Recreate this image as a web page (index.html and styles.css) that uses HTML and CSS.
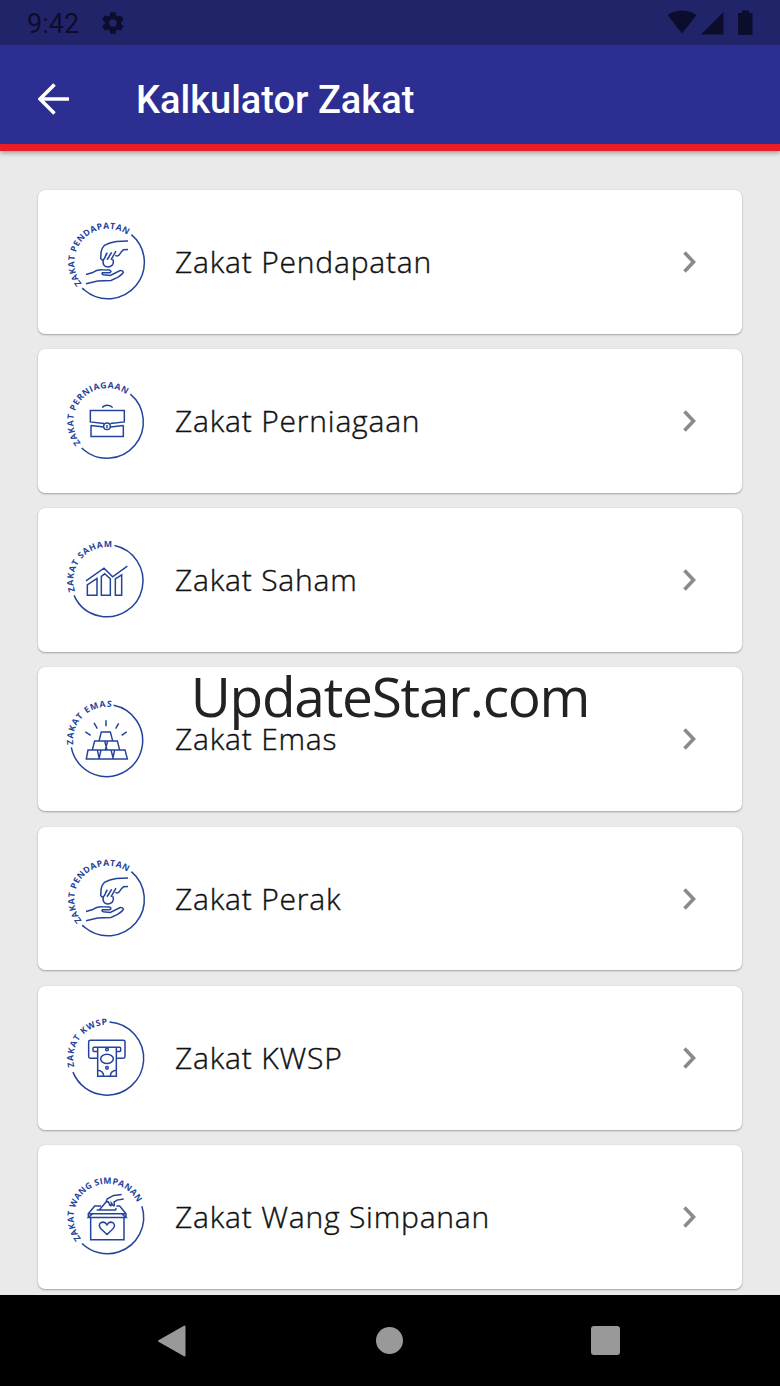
FILE: index.html
```html
<!DOCTYPE html>
<html lang="ms">
  <head>
    <meta charset="UTF-8">
    <title>Kalkulator Zakat</title>
    <link rel="stylesheet" href="styles.css">
  </head>
  <body>
    <!-- shared shapes -->
    <svg class="defs" width="0" height="0">
      <defs>
        <path id="ring" d="M-101 0A101 101 0 0 1 101 0A101 101 0 0 1 -101 0"/>
        <path id="chevron" d="M2.500 2.500L11.500 12L2.500 21.500"/>
        <g id="hands">
          <path d="M221 93L186 94Q165 97 150 106Q140 116 140 132L139 145Q143 153 149 147"/>
          <path d="M221 118L207 119Q200 124 195 134Q190 140 183 136"/>
          <path d="M149 147L159 128M158 149L172 127M170 149L185 123M159 128Q152 137 151 146M172 127Q164 137 162 145"/>
          <path d="M148 148Q143 161 152 168Q163 174 173 166Q180 158 175 147"/>
          <path d="M95 193L113 188Q130 177 144 179L166 180Q174 184 166 188L145 188Q140 191 147 194L168 196L196 182Q206 180 207 187Q204 193 190 202L170 211L130 213L95 221"/>
        </g>
      </defs>
    </svg>

    <div id="app">
      <header>
        <div class="status">
          <span class="clock">9:42</span>
          <svg class="gear" width="26" height="26" viewBox="0 0 24 24"><path fill-rule="evenodd" d="M19.400 13a7.500 7.500 0 0 0 0-2l2.100-1.600c.2-.2.300-.4.100-.7l-2-3.400c-.1-.2-.4-.3-.6-.2l-2.500 1a7.300 7.300 0 0 0-1.700-1l-.4-2.600c0-.3-.2-.5-.5-.5h-4c-.3 0-.5.2-.5.5L9 5.100a7.300 7.300 0 0 0-1.700 1l-2.500-1c-.2-.1-.5 0-.6.200l-2 3.400c-.1.300-.1.500.1.700L4.500 11a7.500 7.500 0 0 0 0 2l-2.200 1.600c-.2.200-.2.400-.1.700l2 3.400c.1.200.4.300.6.200l2.500-1c.5.400 1.100.7 1.700 1l.4 2.600c0 .3.200.5.500.5h4c.3 0 .5-.2.5-.5l.4-2.600c.6-.3 1.200-.6 1.700-1l2.500 1c.2.100.5 0 .6-.2l2-3.400c.1-.3.100-.5-.1-.7zM12 8.500a3.500 3.500 0 1 1 0 7a3.500 3.500 0 0 1 0-7z"/></svg>
          <svg class="signal" width="86" height="26" viewBox="0 0 86 26">
            <path d="M.5 5Q15 -4 29.500 5L15 23.500Z"/>
            <path d="M34 24.500L56.500 2V24.500Z"/>
            <path d="M71 3H75V.5H82V3H85.500V25H71Z"/>
          </svg>
        </div>
        <div class="bar">
          <svg width="32" height="32" viewBox="0 0 32 32"><path class="back" d="M31 16H2.500M16.500 1.500L2 16L16.500 30.500"/></svg>
          <h1>Kalkulator Zakat</h1>
        </div>
      </header>

      <div id="list">
        <div class="card">
          <svg class="icon" viewBox="2 5.700 300 300">
            <g transform="translate(161 157)">
              <circle r="109" pathLength="360" stroke-dasharray="185 175" transform="rotate(-50)"/>
              <text transform="rotate(-39)" textLength="289"><textPath href="#ring" textLength="289">ZAKAT PENDAPATAN</textPath></text>
            </g>
            <use href="#hands"/>
          </svg>
          <span>Zakat Pendapatan</span>
          <svg class="next" viewBox="0 0 15 24"><use href="#chevron"/></svg>
        </div>

        <div class="card">
          <svg class="icon" viewBox="1 3.300 300 300">
            <g transform="translate(157 156)">
              <circle r="109" pathLength="360" stroke-dasharray="184 176" transform="rotate(-50)"/>
              <text transform="rotate(-39)" textLength="289"><textPath href="#ring" textLength="289">ZAKAT PERNIAGAAN</textPath></text>
            </g>
            <path d="M143 113Q147 106 158 106Q169 106 174 113M148 161L107 156V122H209V156L167 161M109 166V200H206V166M109 167L148 171M206 167L167 171"/>
            <circle cx="157" cy="169" r="10"/>
            <path d="M157 165V174"/>
          </svg>
          <span>Zakat Perniagaan</span>
          <svg class="next" viewBox="0 0 15 24"><use href="#chevron"/></svg>
        </div>

        <div class="card">
          <svg class="icon" viewBox="1 .6 300 300">
            <g transform="translate(157 153)">
              <circle r="108" pathLength="360" stroke-dasharray="234 126" transform="rotate(-78)"/>
              <text transform="rotate(-18)" textLength="205"><textPath href="#ring" textLength="205">ZAKAT SAHAM</textPath></text>
            </g>
            <path d="M94 153L148 115L174 141L218 109M98 196V165L127 146V196ZM140 196V140L150 132L167 147V196ZM182 196V147L201 135V196Z"/>
          </svg>
          <span>Zakat Saham</span>
          <svg class="next" viewBox="0 0 15 24"><use href="#chevron"/></svg>
        </div>

        <div class="card">
          <svg class="icon" viewBox="0 -1.800 300 300">
            <g transform="translate(155 153)">
              <circle r="108" pathLength="360" stroke-dasharray="248 112" transform="rotate(-79)"/>
              <text transform="rotate(-7)" textLength="185"><textPath href="#ring" textLength="185">ZAKAT EMAS</textPath></text>
            </g>
            <path d="M91 127L107 137M117 100L127 117M153 92V110M191 101L182 117M215 127L200 137"/>
            <path d="M139 127H166L173 154H132ZM119 154H149L156 181H112ZM158 154H187L194 181H151ZM99 181H127L133 208H94ZM138 181H168L175 208H132ZM179 181H210L217 208H173Z"/>
          </svg>
          <span>Zakat Emas</span>
          <svg class="next" viewBox="0 0 15 24"><use href="#chevron"/></svg>
        </div>

        <div class="card">
          <svg class="icon" viewBox="2 5.700 300 300">
            <g transform="translate(161 157)">
              <circle r="109" pathLength="360" stroke-dasharray="185 175" transform="rotate(-50)"/>
              <text transform="rotate(-39)" textLength="289"><textPath href="#ring" textLength="289">ZAKAT PENDAPATAN</textPath></text>
            </g>
            <use href="#hands"/>
          </svg>
          <span>Zakat Perak</span>
          <svg class="next" viewBox="0 0 15 24"><use href="#chevron"/></svg>
        </div>

        <div class="card">
          <svg class="icon" viewBox="1 3.500 300 300">
            <g transform="translate(157 155)">
              <circle r="110" pathLength="360" stroke-dasharray="244 116" transform="rotate(-86)"/>
              <text transform="rotate(-14)" textLength="184"><textPath href="#ring" textLength="184">ZAKAT KWSP</textPath></text>
            </g>
            <path d="M130 154H107Q102 154 102 149V105Q102 100 107 100H206Q211 100 211 105V149Q211 154 206 154H186"/>
            <path d="M129 134H118Q115 134 115 131V124Q115 121 118 121H195Q198 121 198 124V131Q198 134 195 134H186M129 122V208H185V122M130 190Q146 192 147 207M184 190Q168 192 167 207"/>
            <ellipse cx="157" cy="156" rx="19" ry="14"/>
            <circle cx="157" cy="128" r="4"/>
            <circle cx="157" cy="183" r="4"/>
          </svg>
          <span>Zakat KWSP</span>
          <svg class="next" viewBox="0 0 15 24"><use href="#chevron"/></svg>
        </div>

        <div class="card">
          <svg class="icon" viewBox="0 5.700 300 300">
            <g transform="translate(157 157)">
              <circle r="109" pathLength="360" stroke-dasharray="152 208" transform="rotate(-18)"/>
              <text transform="rotate(-39)" textLength="339"><textPath href="#ring" textLength="339">ZAKAT WANG SIMPANAN</textPath></text>
            </g>
            <path d="M113 146H200L213 157H100ZM100 146H213V157H100ZM107 157V224H207V157M100 146L119 123H138M213 146L194 123H184M125 135H181L184 129M134 133L153 111L157 101L176 91L200 88M153 111L160 110L165 121Q170 125 169 114L175 122Q180 123 177 111L186 105L206 102"/>
            <path d="M156 208L137 190Q129 180 137 173Q149 167 156 179Q163 167 174 173Q183 181 174 191Z"/>
          </svg>
          <span>Zakat Wang Simpanan</span>
          <svg class="next" viewBox="0 0 15 24"><use href="#chevron"/></svg>
        </div>
      </div>

      <div id="nav">
        <svg width="30" height="32" viewBox="0 0 30 32"><path d="M27.500 1.500V30.500L2 16Z"/></svg>
        <div class="home"></div>
        <div class="recent"></div>
      </div>

      <div id="watermark">UpdateStar.com</div>
    </div>
  </body>
</html>
```

FILE: styles.css
```css
body {
  margin: 0;
}
#app {
  position: relative;
  width: 780px;
  height: 1386px;
  display: flex;
  flex-direction: column;
  overflow: hidden;
  background-color: #eaeaea;
}
.defs {
  position: absolute;
}

header {
  background-color: #2c2e92;
  border-bottom: 7px solid #ea1c24;
  box-shadow: 0 2px 5px rgba(0, 0, 0, 0.35);
}
.status {
  height: 45px;
  box-sizing: border-box;
  padding: 0 27px;

  display: flex;
  align-items: center;

  background-color: #222469;
  color: #0c0d2c;
  fill: #0c0d2c;
}
.clock {
  font-family: Roboto, sans-serif;
  font-size: 27px;
  width: 73px;
  padding-top: 3px;
}
.signal {
  margin-left: auto;
}
.bar {
  height: 99px;
  padding-left: 38px;
  padding-top: 9px;
  box-sizing: border-box;

  display: flex;
  align-items: center;
  gap: 66px;
}
.back {
  fill: none;
  stroke: #fff;
  stroke-width: 3.6;
}
h1 {
  margin: 0;
  padding-top: 2px;
  font-family: Roboto, sans-serif;
  font-weight: 500;
  font-size: 38px;
  color: #fff;
}

#list {
  height: 1144px;
  box-sizing: border-box;
  padding: 39px 38px 0;

  display: flex;
  flex-direction: column;
  gap: 15.400px;
}
.card {
  flex: none;
  height: 143.770px;
  box-sizing: border-box;
  padding: 0 45px 0 17px;

  display: flex;
  align-items: center;

  background-color: #fff;
  border-radius: 7px;
  box-shadow: 0 1px 2px rgba(0, 0, 0, 0.3), 0 0 1px rgba(0, 0, 0, 0.15);
}
.card span {
  margin-left: 20px;
  padding-bottom: 1px;
  font-family: "Open Sans", sans-serif;
  font-size: 30px;
  font-weight: 300;
  letter-spacing: 0.8px;
  color: #111;
  -webkit-text-stroke: 0.4px #111;
}
.icon {
  width: 100px;
  height: 100px;
  fill: none;
  stroke: #24449c;
  stroke-width: 4.5;
}
.icon text {
  font-family: "Open Sans", sans-serif;
  font-size: 26px;
  font-weight: 700;
  fill: #24449c;
  stroke: none;
}
.next {
  width: 15px;
  height: 24px;
  margin-left: auto;
  fill: none;
  stroke: #8b8b8b;
  stroke-width: 3.600;
}

#nav {
  height: 91px;
  padding: 0 160px 0 157px;
  box-sizing: border-box;

  display: flex;
  align-items: center;
  justify-content: space-between;

  background-color: #000;
}
#nav svg {
  fill: #999;
  stroke: #999;
  stroke-width: 2;
  stroke-linejoin: round;
}
.home {
  width: 27px;
  height: 27px;
  border-radius: 50%;
  background-color: #999;
}
.recent {
  width: 29px;
  height: 29px;
  border-radius: 3px;
  background-color: #999;
}

/* floats over the list */
#watermark {
  position: absolute;
  left: 0;
  top: 656px;
  width: 780px;
  text-align: center;
  font-family: "Open Sans", sans-serif;
  font-size: 55px;
  letter-spacing: -1.25px;
  line-height: 80px;
  color: #222;
}
```
